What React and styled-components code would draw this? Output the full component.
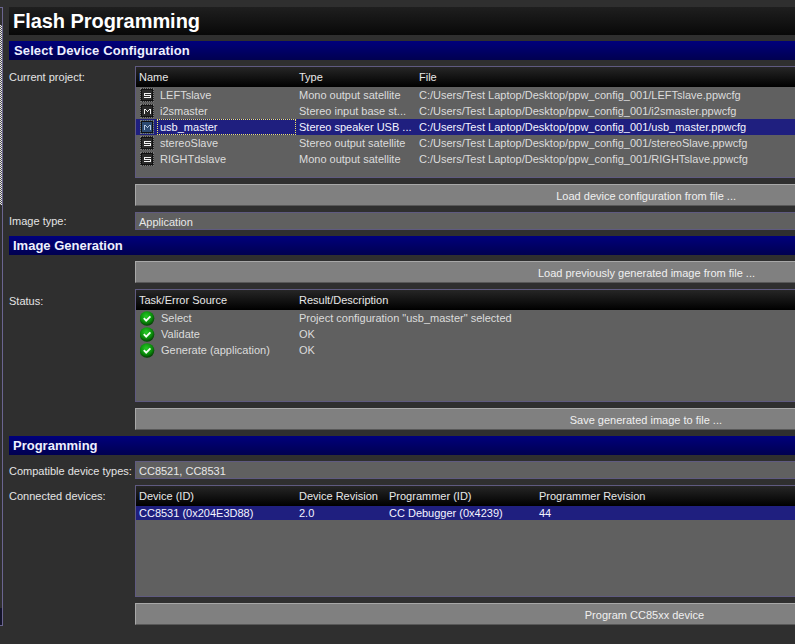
import React from "react";
import styled, { createGlobalStyle } from "styled-components";

const GlobalStyle = createGlobalStyle`
  html, body {
    margin: 0;
    padding: 0;
    height: 100%;
    background: #2f2f2f;
  }
  * {
    box-sizing: border-box;
  }
`;

const Screen = styled.div`
  display: flex;
  width: 795px;
  height: 644px;
  overflow: hidden;
  background: #2f2f2f;
  color: #e8e8e8;
  font-family: "Liberation Sans", Arial, sans-serif;
  font-size: 11px;
`;

const Sliver = styled.div`
  flex: none;
  width: 3px;
  height: 619px;
  margin-top: 7px;
  border-top: 1px solid #6b6590;
  border-right: 1px solid #6b6590;
  border-bottom: 1px solid #6b6590;
  background:
    linear-gradient(#2f2f2f, #2f2f2f) top / 100% 17px no-repeat,
    linear-gradient(#14142a, #14142a) bottom / 100% 17px no-repeat,
    linear-gradient(#2f2f2f, #2f2f2f) bottom / 100% 420px no-repeat,
    repeating-conic-gradient(#e8e8e8 0 25%, #555 0 50%) 0 0 / 2px 2px;
`;

const Main = styled.main`
  flex: 1;
  min-width: 0;
  padding: 7px 0 0 6px;
  display: flex;
  flex-direction: column;
`;

const Title = styled.h1`
  margin: 0 0 6px;
  height: 28px;
  padding-left: 4px;
  background: linear-gradient(#1f1f1f, #080808);
  color: #fff;
  font-size: 20px;
  font-weight: bold;
  letter-spacing: -0.05px;
  line-height: 28px;
`;

const Section = styled.h2`
  margin: 0 0 6px;
  height: 19px;
  padding-left: ${(p) => (p.$wide ? 5 : 4)}px;
  background: linear-gradient(#00007c, #000050);
  color: #eef0ff;
  font-size: 13px;
  font-weight: bold;
  letter-spacing: ${(p) => (p.$wide ? 0.12 : 0)}px;
  line-height: 19px;
`;

const Row = styled.div`
  display: grid;
  grid-template-columns: 126px 1fr;
  margin-bottom: 6px;
`;

const Label = styled.label`
  padding-top: ${(p) => p.$top}px;
  color: #e4e4e4;
  white-space: nowrap;
`;

const Field = styled.div`
  height: 18px;
  padding: 1px 0 0 3px;
  border: 1px solid #5f5a80;
  border-right: 0;
  background: #606060;
  color: #e8e8e8;
  line-height: 16px;
`;

const ActionButton = styled.button`
  display: block;
  grid-column: 2;
  width: 100%;
  height: 22px;
  padding: 2px ${(p) => p.$right}px 0 0;
  border: 0;
  border-top: 1px solid #a8a8a8;
  border-left: 1px solid #a8a8a8;
  border-bottom: 1px solid #585858;
  background: #808080;
  color: #f0f0f0;
  font: inherit;
  text-align: right;
`;

const Table = styled.div`
  height: ${(p) => p.$height}px;
  border: 1px solid #5f5a80;
  border-right: 0;
  background: #606060;
  overflow: hidden;
`;

const HeadRow = styled.div`
  display: grid;
  grid-template-columns: ${(p) => p.$cols};
  height: 20px;
  background: linear-gradient(#262626, #000);
  color: #e8e8e8;
  line-height: 20px;
`;

const BodyRow = styled.div`
  display: grid;
  grid-template-columns: ${(p) => p.$cols};
  height: ${(p) => p.$h || 16}px;
  background: ${(p) => (p.$selected ? "#1f1f7f" : "transparent")};
  color: ${(p) => (p.$selected ? "#f4f4ff" : "#dcdcdc")};
  line-height: ${(p) => p.$h || 16}px;
`;

const Cell = styled.div`
  padding-left: 3px;
  overflow: hidden;
  white-space: nowrap;
`;

const NameCell = styled.div`
  display: flex;
  align-items: center;
  min-width: 0;
  padding-left: 4px;
`;

const NameText = styled.span`
  flex: 1;
  height: 16px;
  margin-left: 3px;
  padding-left: 2px;
  border: 1px dotted ${(p) => (p.$focus ? "#f0e868" : "transparent")};
  line-height: 14px;
  overflow: hidden;
  white-space: nowrap;
`;

const RoleBox = styled.span`
  flex: none;
  display: flex;
  align-items: center;
  justify-content: center;
  width: 14px;
  height: 14px;
  border: 1px dotted #7c7c7c;
  outline: 1px solid #101010;
  outline-offset: -2px;
  background: ${(p) => (p.$selected ? "#2c4a72" : "#2a2a2a")};
  color: ${(p) => (p.$selected ? "#b8c8e0" : "#f2f2f2")};
`;

const RoleIcon = ({ kind, selected }) => (
  <RoleBox $selected={selected}>
    <svg width="7" height="5" viewBox="0 0 7 5" shapeRendering="crispEdges" fill="currentColor">
      {kind === "S" ? (
        <path d="M0 0h7v1H1v1h6v3H0V4h6V3H0z" />
      ) : (
        <path d="M0 0h2v1h1v1h1V1h1V0h2v5H6V1H5v1H4v1H3V2H2V1H1v4H0z" />
      )}
    </svg>
  </RoleBox>
);

const CheckIcon = () => (
  <svg width="15" height="15" viewBox="0 0 15 15" style={{ flex: "none" }}>
    <defs>
      <radialGradient id="okBall" cx="45%" cy="35%" r="70%">
        <stop offset="0%" stopColor="#26cc26" />
        <stop offset="60%" stopColor="#0a8a0a" />
        <stop offset="100%" stopColor="#012a01" />
      </radialGradient>
    </defs>
    <circle cx="7" cy="7.500" r="7.300" fill="url(#okBall)" />
    <path d="M3.800 7.200l2.400 2.500 4.200-4.300" fill="none" stroke="#f4fff4" strokeWidth="1.900" />
  </svg>
);

const projectCols = "160px 120px 1fr";
const projects = [
  ["S", "LEFTslave", "Mono output satellite", "C:/Users/Test Laptop/Desktop/ppw_config_001/LEFTslave.ppwcfg"],
  ["M", "i2smaster", "Stereo input base st...", "C:/Users/Test Laptop/Desktop/ppw_config_001/i2smaster.ppwcfg"],
  ["M", "usb_master", "Stereo speaker USB ...", "C:/Users/Test Laptop/Desktop/ppw_config_001/usb_master.ppwcfg"],
  ["S", "stereoSlave", "Stereo output satellite", "C:/Users/Test Laptop/Desktop/ppw_config_001/stereoSlave.ppwcfg"],
  ["S", "RIGHTdslave", "Mono output satellite", "C:/Users/Test Laptop/Desktop/ppw_config_001/RIGHTslave.ppwcfg"],
];

const statusCols = "160px 1fr";
const statusRows = [
  ["Select", 'Project configuration "usb_master" selected'],
  ["Validate", "OK"],
  ["Generate (application)", "OK"],
];

const deviceCols = "160px 90px 150px 1fr";

export default function App() {
  return (
    <Screen>
      <GlobalStyle />
      <Sliver />
      <Main>
        <Title>Flash Programming</Title>

        <Section $wide>Select Device Configuration</Section>
        <Row>
          <Label $top={5}>Current project:</Label>
          <Table $height={112}>
            <HeadRow $cols={projectCols}>
              <Cell>Name</Cell>
              <Cell>Type</Cell>
              <Cell>File</Cell>
            </HeadRow>
            {projects.map(([kind, name, type, file]) => {
              const selected = name === "usb_master";
              return (
                <BodyRow key={name} $cols={projectCols} $selected={selected}>
                  <NameCell>
                    <RoleIcon kind={kind} selected={selected} />
                    <NameText $focus={selected}>{name}</NameText>
                  </NameCell>
                  <Cell>{type}</Cell>
                  <Cell>{file}</Cell>
                </BodyRow>
              );
            })}
          </Table>
        </Row>
        <Row>
          <ActionButton $right={59}>Load device configuration from file ...</ActionButton>
        </Row>
        <Row>
          <Label $top={3}>Image type:</Label>
          <Field>Application</Field>
        </Row>

        <Section>Image Generation</Section>
        <Row>
          <ActionButton $right={40}>Load previously generated image from file ...</ActionButton>
        </Row>
        <Row>
          <Label $top={6}>Status:</Label>
          <Table $height={113}>
            <HeadRow $cols={statusCols}>
              <Cell>Task/Error Source</Cell>
              <Cell>Result/Description</Cell>
            </HeadRow>
            {statusRows.map(([task, result]) => (
              <BodyRow key={task} $cols={statusCols}>
                <NameCell>
                  <CheckIcon />
                  <NameText>{task}</NameText>
                </NameCell>
                <Cell>{result}</Cell>
              </BodyRow>
            ))}
          </Table>
        </Row>
        <Row>
          <ActionButton $right={73}>Save generated image to file ...</ActionButton>
        </Row>

        <Section>Programming</Section>
        <Row>
          <Label $top={4}>Compatible device types:</Label>
          <Field>CC8521, CC8531</Field>
        </Row>
        <Row>
          <Label $top={5}>Connected devices:</Label>
          <Table $height={112}>
            <HeadRow $cols={deviceCols}>
              <Cell>Device (ID)</Cell>
              <Cell>Device Revision</Cell>
              <Cell>Programmer (ID)</Cell>
              <Cell>Programmer Revision</Cell>
            </HeadRow>
            <BodyRow $cols={deviceCols} $selected $h={14}>
              <Cell>CC8531 (0x204E3D88)</Cell>
              <Cell>2.0</Cell>
              <Cell>CC Debugger (0x4239)</Cell>
              <Cell>44</Cell>
            </BodyRow>
          </Table>
        </Row>
        <Row>
          <ActionButton $right={91}>Program CC85xx device</ActionButton>
        </Row>
      </Main>
    </Screen>
  );
}
